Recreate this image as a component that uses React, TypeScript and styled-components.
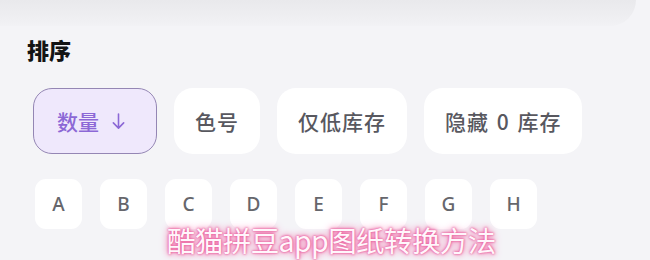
import styled, { createGlobalStyle } from 'styled-components';

const GlobalStyle = createGlobalStyle`
  html, body {
    margin: 0;
    padding: 0;
    background: #f4f4f7;
  }
  body {
    font-family: "Noto Sans CJK SC", "Noto Sans", sans-serif;
  }
`;

const sortOptions = [
  { label: '色号' },
  { label: '仅低库存' },
  { label: '隐藏 0 库存' },
];

const letters = ['A', 'B', 'C', 'D', 'E', 'F', 'G', 'H'];

export default function App() {
  return (
    <>
      <GlobalStyle />
      <Page>
        <TopShade />
        <Title>排序</Title>
        <ChipRow>
          <Chip $active>
            数量
            <ArrowIcon viewBox="0 0 16 20" aria-hidden>
              <path d="M8 2v15M2.5 11.5 8 17l5.5-5.5" />
            </ArrowIcon>
          </Chip>
          {sortOptions.map((o) => (
            <Chip key={o.label}>{o.label}</Chip>
          ))}
        </ChipRow>
        <LetterRow>
          {letters.map((l) => (
            <LetterKey key={l}>{l}</LetterKey>
          ))}
        </LetterRow>
        <Caption>酷猫拼豆app图纸转换方法</Caption>
      </Page>
    </>
  );
}

const Page = styled.div`
  position: relative;
  width: 650px;
  height: 260px;
  overflow: hidden;
  background: #f4f4f7;
  display: flex;
  flex-direction: column;
`;

const TopShade = styled.div`
  height: 26px;
  margin: 0 14px 0 0;
  border-radius: 0 0 26px 0;
  background: linear-gradient(180deg, #e9e9ec 0%, #eeeef1 60%, #f2f2f5 100%);
`;

const Title = styled.div`
  margin: 8px 0 0 27px;
  font-size: 22px;
  line-height: 30px;
  font-weight: 900;
  color: #141414;
`;

const ChipRow = styled.div`
  display: flex;
  gap: 17px;
  margin: 24px 0 0 33px;
`;

const Chip = styled.div<{ $active?: boolean }>`
  box-sizing: border-box;
  height: 66px;
  padding: ${(p) => (p.$active ? '0 30px 0 23px' : '0 20px')};
  display: flex;
  align-items: center;
  gap: 12px;
  border-radius: 19px;
  font-size: 21px;
  font-weight: 500;
  letter-spacing: ${(p) => (p.$active ? '0' : '1px')};
  word-spacing: 2px;
  white-space: nowrap;
  color: ${(p) => (p.$active ? '#8c68d6' : '#58585f')};
  background: ${(p) => (p.$active ? '#efe8fc' : '#ffffff')};
  border: ${(p) => (p.$active ? '1.5px solid #9486b4' : '1.5px solid transparent')};
`;

const ArrowIcon = styled.svg`
  width: 15px;
  height: 19px;
  fill: none;
  stroke: #8c68d6;
  stroke-width: 1.7;
  stroke-linecap: round;
  stroke-linejoin: round;
`;

const LetterRow = styled.div`
  display: flex;
  gap: 18px;
  margin: 25px 0 0 35px;
`;

const LetterKey = styled.div`
  width: 47px;
  height: 50px;
  border-radius: 11px;
  background: #ffffff;
  display: flex;
  align-items: center;
  justify-content: center;
  font-family: "Noto Sans", sans-serif;
  font-size: 19px;
  font-weight: 500;
  color: #66666c;
`;

const Caption = styled.div`
  position: absolute;
  left: 167px;
  top: 221px;
  font-size: 28.5px;
  line-height: 38px;
  letter-spacing: -0.6px;
  color: #fff6fb;
  white-space: nowrap;
  text-shadow:
    0 0 2px #ea5c9c,
    0 0 3px #ea5c9c,
    0 0 6px #f07ab0,
    0 0 10px #f5a0c8;
`;
